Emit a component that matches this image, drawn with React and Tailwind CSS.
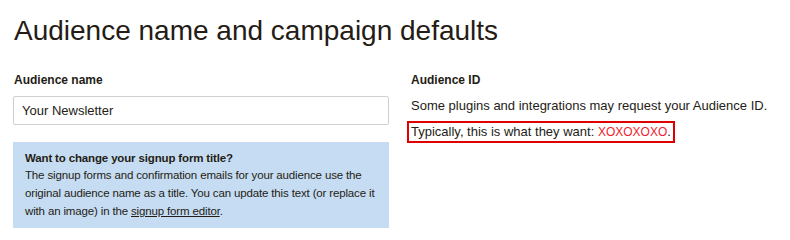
export default function App() {
  return (
    <div className="w-[790px] h-[240px] bg-white text-[#241c15] font-['Liberation_Sans',Arial,sans-serif] px-[14px] pt-[12px] overflow-hidden">
      <h1 className="text-[28px] leading-[38px] font-normal">
        Audience name and campaign defaults
      </h1>

      <div className="flex gap-[22px] mt-[22px]">
        <div className="w-[376px] shrink-0 -ml-px">
          <label className="block text-[12px] leading-[16px] font-bold ml-px">Audience name</label>
          <input
            type="text"
            defaultValue="Your Newsletter"
            className="mt-[8px] w-full h-[29px] px-[8px] border border-[#cfcfcf] rounded-[2px] text-[13px] text-[#241c15] focus:outline-none"
          />
          <div className="mt-[17px] bg-[#c6dcf2] pl-[12px] pr-[2px] pt-[9px] pb-[8px] text-[11.5px] tracking-[-0.15px]">
            <p className="font-bold leading-[15px]">Want to change your signup form title?</p>
            <p className="leading-[18px]">
              The signup forms and confirmation emails for your audience use the
              <br />
              original audience name as a title. You can update this text (or replace it
              <br />
              with an image) in the <a href="#" className="underline">signup form editor</a>.
            </p>
          </div>
        </div>

        <div className="flex-1">
          <h2 className="text-[12px] leading-[16px] font-bold">Audience ID</h2>
          <p className="mt-[8px] text-[13px] leading-[20px]">
            Some plugins and integrations may request your Audience ID.
          </p>
          <p className="mt-[5px] -ml-[4px] inline-block border-2 border-[#e00000] px-[2px] text-[13px] leading-[18px]">
            Typically, this is what they want: <span className="text-[#f21c2c] text-[12px]">XOXOXOXO</span>.
          </p>
        </div>
      </div>
    </div>
  )
}
